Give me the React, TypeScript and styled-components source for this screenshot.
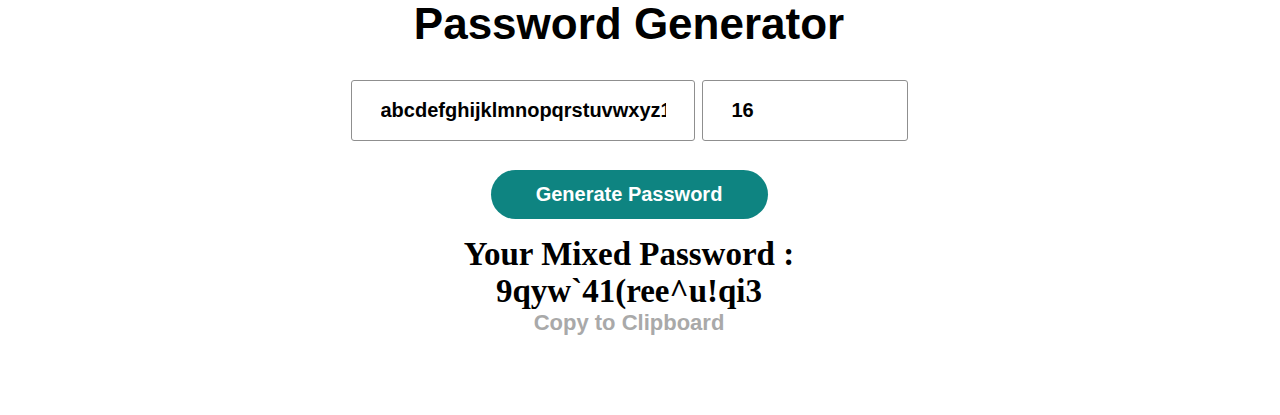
import React, { useState } from "react";
import styled, { createGlobalStyle } from "styled-components";

const GlobalStyle = createGlobalStyle`
  html, body {
    margin: 0;
    padding: 0;
    background: #ffffff;
  }
  body {
    font-family: "Liberation Sans", Arial, sans-serif;
  }
`;

const Page = styled.main`
  width: 1280px;
  height: 415px;
  box-sizing: border-box;
  padding-right: 22px;
  display: flex;
  flex-direction: column;
  align-items: center;
`;

const Title = styled.h1`
  margin: 0;
  font-family: "Liberation Sans", Arial, sans-serif;
  font-size: 44px;
  font-weight: 700;
  line-height: 48px;
  color: #000;
`;

const InputRow = styled.div`
  display: flex;
  gap: 7px;
  margin-top: 32px;
`;

const Field = styled.input<{ $w: number }>`
  box-sizing: border-box;
  width: ${(p) => p.$w}px;
  height: 61px;
  padding: 0 28px 0 29px;
  border: 1px solid #8f8f8f;
  border-radius: 3px;
  font-family: "Liberation Sans", Arial, sans-serif;
  font-size: 20px;
  font-weight: 700;
  color: #000;
  background: #fff;
  outline: none;
`;

const GenerateButton = styled.button`
  margin-top: 29px;
  width: 277px;
  height: 49px;
  border: none;
  border-radius: 25px;
  background: #0e8481;
  color: #fff;
  font-family: "Liberation Sans", Arial, sans-serif;
  font-size: 20px;
  font-weight: 700;
  cursor: pointer;
`;

const Result = styled.h2`
  margin: 17px 0 0;
  font-family: "Liberation Serif", "Times New Roman", serif;
  font-size: 33px;
  font-weight: 700;
  line-height: 37px;
  text-align: center;
  color: #000;
`;

const CopyLink = styled.div`
  margin-top: 0;
  font-family: "Liberation Sans", Arial, sans-serif;
  font-size: 22px;
  font-weight: 700;
  line-height: 25px;
  color: #a9a9a9;
  cursor: pointer;
`;

export default function App() {
  const [chars, setChars] = useState(
    "abcdefghijklmnopqrstuvwxyz1234567890!@#$%^&*()`~"
  );
  const [len, setLen] = useState("16");
  return (
    <>
      <GlobalStyle />
      <Page>
        <Title>Password Generator</Title>
        <InputRow>
          <Field $w={344} value={chars} onChange={(e) => setChars(e.target.value)} />
          <Field $w={206} value={len} onChange={(e) => setLen(e.target.value)} />
        </InputRow>
        <GenerateButton>Generate Password</GenerateButton>
        <Result>
          Your Mixed Password :
          <br />
          9qyw`41(ree^u!qi3
        </Result>
        <CopyLink>Copy to Clipboard</CopyLink>
      </Page>
    </>
  );
}
